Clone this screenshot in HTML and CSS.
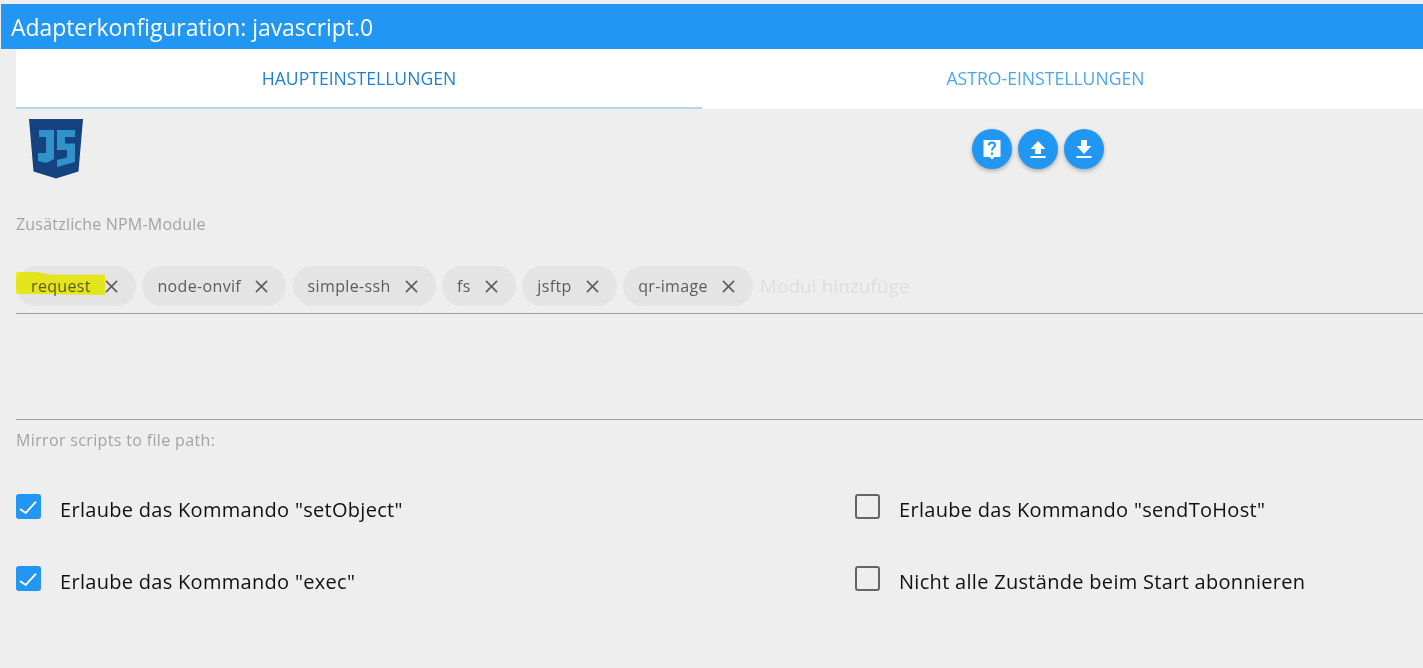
FILE: index.html
```html
<!DOCTYPE html>
<html lang="de">
<head>
<meta charset="utf-8">
<title>Adapterkonfiguration</title>
<link rel="stylesheet" href="styles.css">
</head>
<body>
<header class="title">Adapterkonfiguration: javascript.0</header>
<main class="content">
  <nav class="tabs">
    <div class="tab tab-active">HAUPTEINSTELLUNGEN</div>
    <div class="tab">ASTRO-EINSTELLUNGEN</div>
  </nav>
  <div class="toolbar">
    <svg class="logo" viewBox="0 0 54 60" aria-hidden="true">
      <path fill="#14437f" d="M0 0H54L49.500 52.500L27 59.500L4.500 52.500Z"/>
      <path fill="#3191c9" d="M10 11H25V40L17 44L9 42V34H17V18H10Z"/>
      <path fill="#3191c9" d="M28 11H46V18H36V24.500H46V43L28 48V41L38 38.500V31H28Z"/>
    </svg>
    <div class="actions">
      <button class="fab" aria-label="Hilfe">
        <svg viewBox="0 0 24 24"><path fill="#fff" d="M3.500 3H20.500V20H14.500L12 22.500L9.500 20H3.500Z"/><path fill="none" stroke="#2196f3" stroke-width="2" d="M9 8.500C9 6.500 10.500 5.500 12 5.500C13.800 5.500 15 6.700 15 8.200C15 10.300 12 10.500 12 13.500"/><rect x="11" y="15.500" width="2" height="2.200" fill="#2196f3"/></svg>
      </button>
      <button class="fab" aria-label="Hochladen">
        <svg viewBox="0 0 24 24"><path fill="#fff" d="M12 4L19.500 12H15V17H9V12H4.500Z"/><rect x="4.500" y="19" width="15" height="2" fill="#fff"/></svg>
      </button>
      <button class="fab" aria-label="Herunterladen">
        <svg viewBox="0 0 24 24"><path fill="#fff" d="M9 3H15V9H19.500L12 17L4.500 9H9Z"/><rect x="4.500" y="19" width="15" height="2" fill="#fff"/></svg>
      </button>
    </div>
  </div>
  <label class="field-label npm-label">Zusätzliche NPM-Module</label>
  <div class="chips">
    <span class="mark"></span>
    <span class="chip"><span class="chip-text">request</span><svg class="x" viewBox="0 0 14 14"><path d="M1 1L13 13M13 1L1 13"/></svg></span>
    <span class="chip"><span class="chip-text">node-onvif</span><svg class="x" viewBox="0 0 14 14"><path d="M1 1L13 13M13 1L1 13"/></svg></span>
    <span class="chip"><span class="chip-text">simple-ssh</span><svg class="x" viewBox="0 0 14 14"><path d="M1 1L13 13M13 1L1 13"/></svg></span>
    <span class="chip"><span class="chip-text">fs</span><svg class="x" viewBox="0 0 14 14"><path d="M1 1L13 13M13 1L1 13"/></svg></span>
    <span class="chip"><span class="chip-text">jsftp</span><svg class="x" viewBox="0 0 14 14"><path d="M1 1L13 13M13 1L1 13"/></svg></span>
    <span class="chip"><span class="chip-text">qr-image</span><svg class="x" viewBox="0 0 14 14"><path d="M1 1L13 13M13 1L1 13"/></svg></span>
    <span class="placeholder">Modul hinzufüge</span>
  </div>
  <div class="empty-field"></div>
  <label class="field-label mirror-label">Mirror scripts to file path:</label>
  <div class="options">
    <div class="option"><span class="box box-on"><svg viewBox="0 0 24 24"><path d="M3.800 14.400L9.300 18.200L19.200 7.400"/></svg></span>Erlaube das Kommando "setObject"</div>
    <div class="option"><span class="box"></span>Erlaube das Kommando "sendToHost"</div>
    <div class="option"><span class="box box-on"><svg viewBox="0 0 24 24"><path d="M3.800 14.400L9.300 18.200L19.200 7.400"/></svg></span>Erlaube das Kommando "exec"</div>
    <div class="option"><span class="box"></span>Nicht alle Zustände beim Start abonnieren</div>
  </div>
</main>
</body>
</html>
```
FILE: styles.css
```css
* { box-sizing: border-box; }
html, body { margin: 0; height: 100%; overflow: hidden; }
body {
  background: #eeeeee;
  padding-top: 4px;
  font-family: "Open Sans", "Noto Sans", sans-serif;
}
.title {
  height: 45px;
  margin-left: 1px;
  padding-left: 10px;
  background: #2196f3;
  color: #fff;
  font-size: 22.900px;
  line-height: 47px;
}
.content { padding-left: 16px; }
.tabs { display: flex; height: 60px; background: #fff; }
.tab {
  flex: 0 0 687px;
  text-align: center;
  font-size: 17.600px;
  line-height: 59px;
  color: #4ba6ec;
}
.tab-active {
  flex-basis: 686px;
  color: #1f7fd0;
  border-bottom: 2px solid #afd7f2;
}
.toolbar { display: flex; height: 90px; padding: 10px 0 0 13px; }
.logo { width: 54px; height: 60px; }
.actions { display: flex; gap: 6px; margin: 10px 0 0 889px; }
.fab {
  width: 40px;
  height: 40px;
  padding: 8px;
  border: 0;
  border-radius: 50%;
  background: #2196f3;
  box-shadow: 0 2px 4px rgba(0,0,0,.28);
}
.fab svg { display: block; width: 24px; height: 24px; }
.field-label {
  display: block;
  font-size: 16px;
  line-height: 20px;
  color: #a3a3a3;
  letter-spacing: .2px;
}
.npm-label { margin-top: 15px; }
.chips {
  position: relative;
  display: flex;
  align-items: center;
  gap: 6.500px;
  height: 57px;
  margin-top: 23px;
  padding: 9px 0 7px;
  border-bottom: 1px solid #a0a0a0;
}
.chip {
  display: flex;
  align-items: center;
  height: 40px;
  padding: 0 18px 0 15px;
  border-radius: 20px;
  background: #e4e4e4;
  color: #5c5c5c;
  font-size: 16px;
  letter-spacing: .35px;
}
.chip-text { margin-right: 14px; }
.x { width: 13px; height: 13px; }
.x path { fill: none; stroke: #5f5f5f; stroke-width: 1.8; }
.placeholder { margin-left: .5px; color: #dedede; font-size: 19px; letter-spacing: .05px; }
.mark {
  position: absolute;
  left: 0;
  top: 15px;
  width: 89px;
  height: 23px;
  background: #ffff20;
  clip-path: polygon(0 0, 24% 0, 38% 12%, 100% 12%, 100% 100%, 0 95%);
  mix-blend-mode: multiply;
}
.empty-field { height: 106px; border-bottom: 1px solid #a0a0a0; }
.mirror-label { margin-top: 10px; letter-spacing: .35px; }
.options {
  display: grid;
  grid-template-columns: 839px 1fr;
  grid-auto-rows: 72px;
  margin-top: 35px;
}
.option {
  display: flex;
  align-items: center;
  height: 48px;
  font-size: 20px;
  color: #111;
  letter-spacing: .3px;
}
.box {
  width: 25px;
  height: 25px;
  margin-right: 19px;
  margin-top: -6px;
  border: 2px solid #666;
  border-radius: 3px;
}
.box-on { border: 0; background: #2196f3; }
.box svg { display: block; width: 25px; height: 25px; }
.box svg path { fill: none; stroke: #fff; stroke-width: 1.8; }
```
